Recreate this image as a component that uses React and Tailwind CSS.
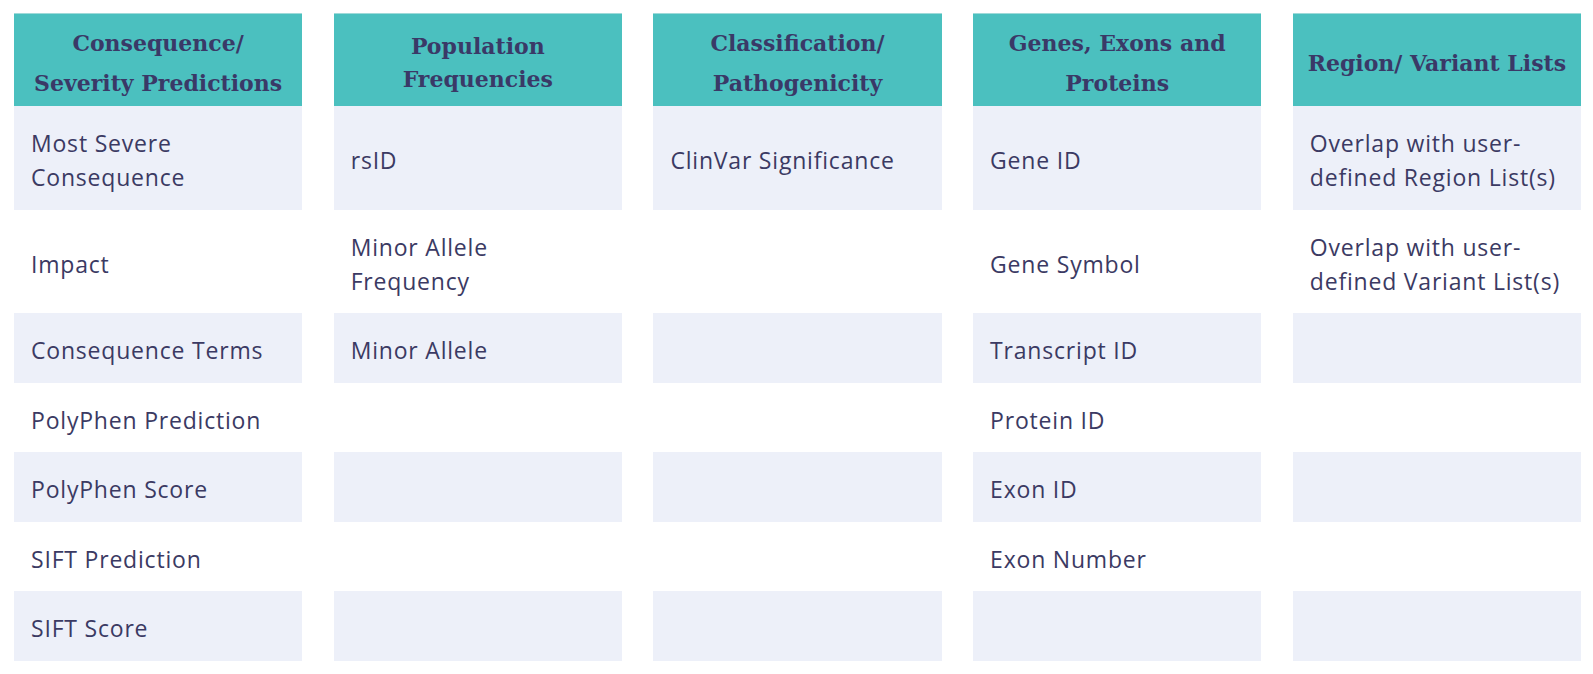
import React from 'react';

const columns = [
    {
        title: ['Consequence/', 'Severity Predictions'],
        rows: ['Most Severe Consequence', 'Impact', 'Consequence Terms', 'PolyPhen Prediction', 'PolyPhen Score', 'SIFT Prediction', 'SIFT Score'],
    },
    {
        title: ['Population', 'Frequencies'],
        tight: true,
        rows: ['rsID', 'Minor Allele Frequency', 'Minor Allele', '', '', '', ''],
    },
    {
        title: ['Classification/', 'Pathogenicity'],
        rows: ['ClinVar Significance', '', '', '', '', '', ''],
    },
    {
        title: ['Genes, Exons and', 'Proteins'],
        rows: ['Gene ID', 'Gene Symbol', 'Transcript ID', 'Protein ID', 'Exon ID', 'Exon Number', ''],
    },
    {
        title: ['Region/ Variant Lists'],
        rows: ['Overlap with user-defined Region List(s)', 'Overlap with user-defined Variant List(s)', '', '', '', '', ''],
    },
];

const Header = ({ col }) => (
    <div className="h-[93px] pt-[6px] flex flex-col items-center justify-center bg-[#4bc0bf] border-t border-[#9fdad9] text-[#3a3967] font-bold text-[22px] tracking-normal text-center font-['DejaVu_Serif',serif]">
        {col.title.map((line) => (
            <span key={line} className={col.tight ? 'leading-[33px]' : 'leading-[40px]'}>{line}</span>
        ))}
    </div>
);

const App = () => {
    return (
        <div className="w-[1593px] h-[674px] bg-white pt-[13px] pl-[14px]">
            <div className="w-[1567px] grid grid-cols-5 gap-x-[31.5px] font-['Open_Sans',sans-serif] text-[#3b3a63] text-[23px] leading-[34px] tracking-[0.8px]">
                {columns.map((col, i) => (
                    <div key={i} style={{ gridColumn: i + 1, gridRow: 1 }}>
                        <Header col={col} />
                    </div>
                ))}
                {columns.map((col, i) =>
                    col.rows.map((text, r) => (
                        <div
                            key={`${i}-${r}`}
                            style={{ gridColumn: i + 1, gridRow: r + 2 }}
                            className={`flex items-center pl-[17px] pr-[12px] pt-[20px] pb-[15.5px] min-h-[69.5px] ${r % 2 === 0 ? 'bg-[#edf0f9]' : 'bg-white'}`}
                        >
                            {text}
                        </div>
                    ))
                )}
            </div>
        </div>
    );
};

export default App;
